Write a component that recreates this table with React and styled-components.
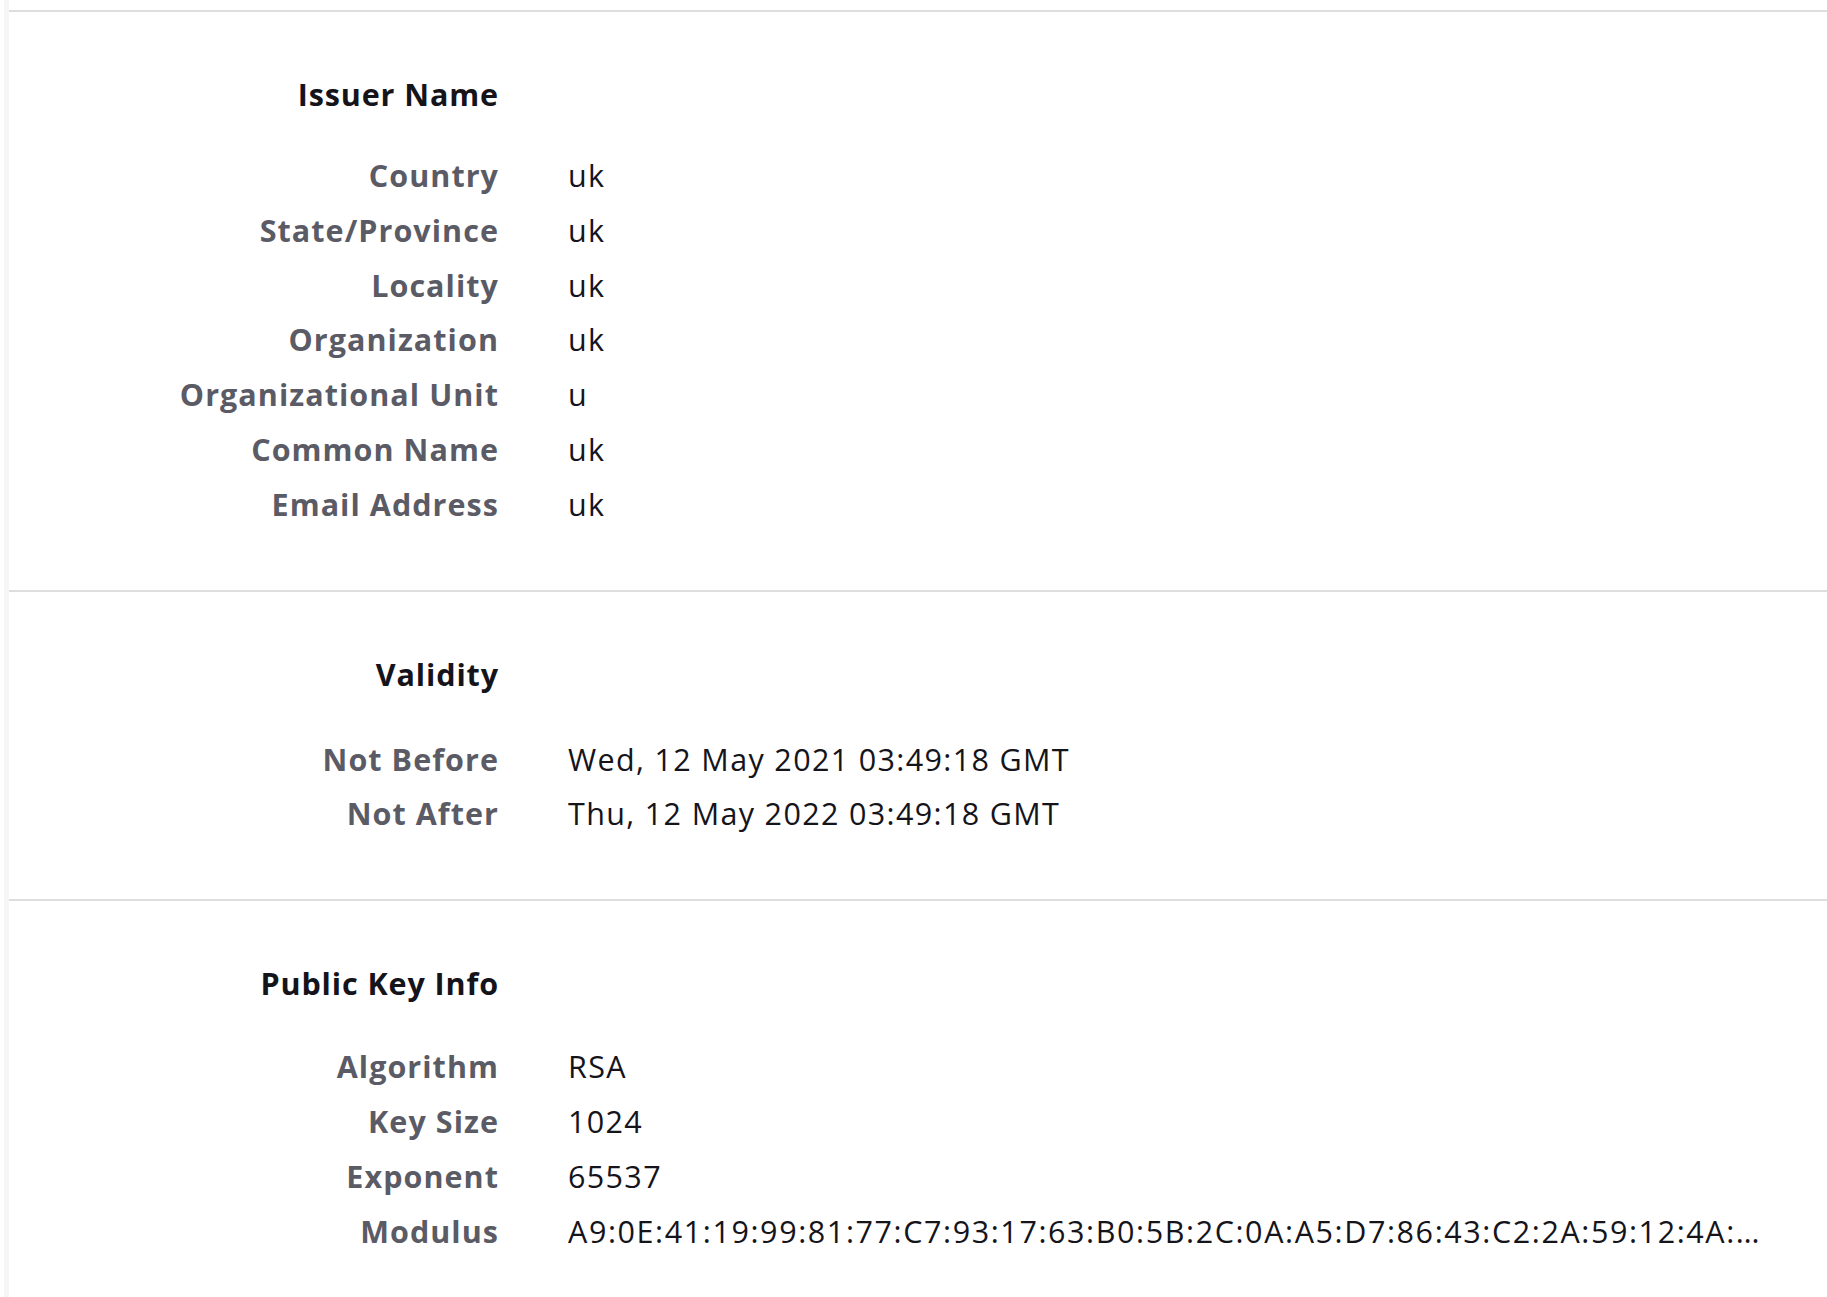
import React from "react";
import styled, { createGlobalStyle } from "styled-components";

const GlobalStyle = createGlobalStyle`
  html, body {
    margin: 0;
    padding: 0;
    background: #ffffff;
  }
  body {
    font-family: "Open Sans", "Noto Sans", sans-serif;
  }
`;

const Page = styled.div`
  padding-left: 4px;
  min-height: 100vh;
  box-sizing: border-box;
`;

const Card = styled.div`
  border-left: 5px solid #f6f6f6;
  padding-top: 10px;
  min-height: 100vh;
  box-sizing: border-box;
`;

const Section = styled.section`
  border-top: 2px solid #dedede;
  padding: 55px 62px 58px 0;
  display: grid;
  grid-template-columns: 490px minmax(0, 1fr);
  column-gap: 69px;
  font-size: 30.5px;
`;

const Heading = styled.h2`
  grid-column: 1;
  margin: 0 0 ${(p) => p.$gap}px;
  text-align: right;
  font-size: 30.5px;
  font-weight: 700;
  line-height: 55px;
  letter-spacing: 0.9px;
  color: #15141a;
`;

const Spacer = styled.div`
  grid-column: 2;
`;

const Label = styled.div`
  grid-column: 1;
  text-align: right;
  font-weight: 700;
  color: #5b5b66;
  line-height: 54.8px;
  letter-spacing: 1.05px;
  white-space: nowrap;
`;

const Value = styled.div`
  grid-column: 2;
  color: #15141a;
  line-height: 54.8px;
  letter-spacing: ${(p) => p.$spacing}px;
  white-space: nowrap;
  overflow: hidden;
  text-overflow: ellipsis;
`;

const sections = [
  {
    title: "Issuer Name",
    gap: 26,
    rows: [
      ["Country", "uk"],
      ["State/Province", "uk"],
      ["Locality", "uk"],
      ["Organization", "uk"],
      ["Organizational Unit", "u"],
      ["Common Name", "uk"],
      ["Email Address", "uk"],
    ],
  },
  {
    title: "Validity",
    gap: 30,
    rows: [
      ["Not Before", "Wed, 12 May 2021 03:49:18 GMT"],
      ["Not After", "Thu, 12 May 2022 03:49:18 GMT"],
    ],
  },
  {
    title: "Public Key Info",
    gap: 28,
    rows: [
      ["Algorithm", "RSA"],
      ["Key Size", "1024"],
      ["Exponent", "65537"],
      [
        "Modulus",
        "A9:0E:41:19:99:81:77:C7:93:17:63:B0:5B:2C:0A:A5:D7:86:43:C2:2A:59:12:4A:\u2026",
      ],
    ],
  },
];

export default function App() {
  return (
    <>
      <GlobalStyle />
      <Page>
        <Card>
          {sections.map((s) => (
            <Section key={s.title}>
              <Heading $gap={s.gap}>{s.title}</Heading>
              <Spacer />
              {s.rows.map(([label, value]) => (
                <React.Fragment key={label}>
                  <Label>{label}</Label>
                  <Value $spacing={label === "Modulus" ? 1.6 : 1.35}>
                    {value}
                  </Value>
                </React.Fragment>
              ))}
            </Section>
          ))}
        </Card>
      </Page>
    </>
  );
}
